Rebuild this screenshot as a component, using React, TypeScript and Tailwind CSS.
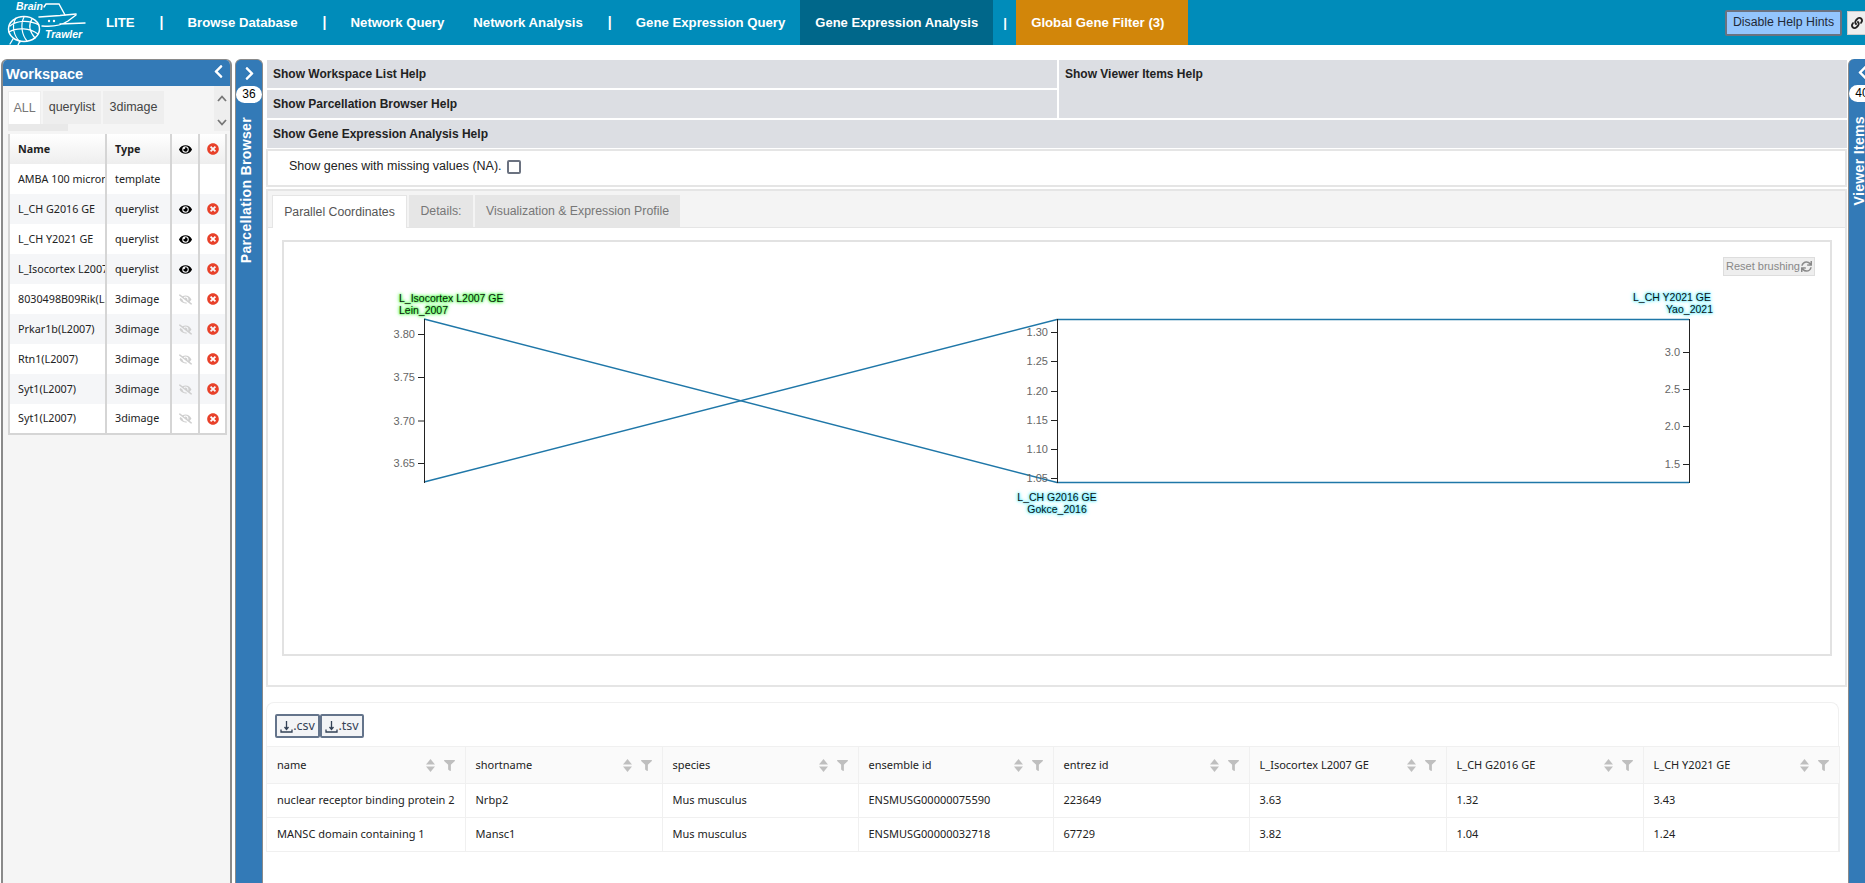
import { FaChevronLeft, FaChevronRight, FaEye, FaEyeSlash, FaFilter, FaLink, FaSync, FaTimesCircle } from "react-icons/fa";

const workspaceRows = [
  { name: "L_CH G2016 GE", type: "querylist", on: true },
  { name: "L_CH Y2021 GE", type: "querylist", on: true },
  { name: "L_Isocortex L2007 GE", type: "querylist", on: true },
  { name: "8030498B09Rik(L2007)", type: "3dimage", on: false },
  { name: "Prkar1b(L2007)", type: "3dimage", on: false },
  { name: "Rtn1(L2007)", type: "3dimage", on: false },
  { name: "Syt1(L2007)", type: "3dimage", on: false },
  { name: "Syt1(L2007)", type: "3dimage", on: false },
];

const geneColumns = [
  { label: "name", width: 198 },
  { label: "shortname", width: 197 },
  { label: "species", width: 196 },
  { label: "ensemble id", width: 195 },
  { label: "entrez id", width: 196 },
  { label: "L_Isocortex L2007 GE", width: 197 },
  { label: "L_CH G2016 GE", width: 197 },
  { label: "L_CH Y2021 GE", width: 196 },
];

const geneRows = [
  ["nuclear receptor binding protein 2", "Nrbp2", "Mus musculus", "ENSMUSG00000075590", "223649", "3.63", "1.32", "3.43"],
  ["MANSC domain containing 1", "Mansc1", "Mus musculus", "ENSMUSG00000032718", "67729", "3.82", "1.04", "1.24"],
];

const axes = [
  { x: 424, ticks: [["3.80", 334], ["3.75", 377], ["3.70", 420.5], ["3.65", 463]] },
  { x: 1057, ticks: [["1.30", 332], ["1.25", 361], ["1.20", 391], ["1.15", 420], ["1.10", 449], ["1.05", 478]] },
  { x: 1689, ticks: [["3.0", 352], ["2.5", 389], ["2.0", 426], ["1.5", 464]] },
] as const;

function Logo() {
  return (
    <div className="relative w-[106px] h-[45px] shrink-0">
      <svg width="100" height="45" viewBox="0 0 100 45" fill="none" stroke="white" strokeLinecap="round">
        <ellipse cx="24" cy="29" rx="15.5" ry="12.5" strokeWidth="1.5" />
        <path d="M10 26 C17 20 30 20 39 25 M9 32 C17 27 30 28 38 34 M16 18 C11 26 14 36 20 42 M24 17 C20 25 22 35 27 41 M32 19 C28 25 30 32 35 38" strokeWidth="1.2" />
        <path d="M13 39 L10 44 M20 41 L18 45" strokeWidth="1.3" />
        <path d="M44 7 L46 4 L59 4 L65 15" strokeWidth="1.4" />
        <path d="M39 17 L60 15.5 L76 14" strokeWidth="1.6" />
        <path d="M42 26 C52 27 62 25 68 21 L76 15 M60 24 L85 23" strokeWidth="1.4" />
        <circle cx="49" cy="21" r="1.2" fill="white" stroke="none" />
        <circle cx="54" cy="21" r="1.2" fill="white" stroke="none" />
      </svg>
      <span className="absolute left-[16px] top-[0px] text-[10.5px] leading-[12px] font-bold italic text-white">Brain</span>
      <span className="absolute left-[45px] top-[28px] text-[10.5px] leading-[12px] font-bold italic text-white">Trawler</span>
    </div>
  );
}

function Sep() {
  return <span className="text-[14px] font-bold text-white w-[3px] mx-[25px]">|</span>;
}

function SortIcon() {
  return (
    <svg width="9" height="13" viewBox="0 0 9 13" fill="#bfbfbf">
      <path d="M4.5 0 L9 5.5 L0 5.5 Z" />
      <path d="M4.5 13 L9 7.5 L0 7.5 Z" />
    </svg>
  );
}

function DownloadIcon() {
  return (
    <svg width="13" height="13" viewBox="0 0 13 13" fill="none" stroke="#334155" strokeWidth="1.3">
      <path d="M6.5 1 V9 M4.5 7 L6.5 9.5 L8.5 7" />
      <path d="M1 9.5 V12 H12 V9.5" />
    </svg>
  );
}

function VerticalTab({ count, label, chevron }: { count: string; label: string; chevron: React.ReactNode }) {
  return (
    <div className="flex flex-col items-center w-[26px] h-full pt-[6px] text-white">
      <div className="h-[20px] text-[15px]">{chevron}</div>
      <div className="w-[26px] h-[17px] shrink-0 bg-white rounded-full text-black text-[12px] leading-[17px] text-center">{count}</div>
      <div className="mt-[14px] mr-[6px] [writing-mode:vertical-rl] rotate-180 text-[14px] leading-[20px] font-bold tracking-[0.35px] whitespace-nowrap">{label}</div>
    </div>
  );
}

function WorkspacePanel() {
  return (
    <div className="w-[231px] ml-[1px] shrink-0 flex flex-col bg-[#f5f5f5] border-x-2 border-t border-[#8a8a8a] rounded-t-md overflow-hidden">
      <div className="h-[26px] shrink-0 bg-[#337ab7] flex items-center justify-between pl-[3px] pr-[4px] text-white">
        <span className="text-[14.5px] font-bold mt-[3px]">Workspace</span>
        <FaChevronLeft className="text-[15px] -mt-[4px]" />
      </div>
      <div className="flex h-[48px] shrink-0">
        <div className="w-[212px] pl-[5px] pt-[5px]">
          <div className="flex gap-[2px] text-[12.5px] h-[33px] text-[#444]">
            <div className="w-[33px] bg-white border border-[#eee] border-b-0 flex items-center justify-center text-[#777]">ALL</div>
            <div className="w-[58px] bg-[#eeeeee] flex items-center justify-center">querylist</div>
            <div className="w-[61px] bg-[#eeeeee] flex items-center justify-center">3dimage</div>
          </div>
          <div className="w-[60px] h-[7px] bg-[#e9e9e9]" />
        </div>
        <div className="w-[16px] h-[45px] bg-[#eeeeee] flex flex-col items-center justify-between pt-[9px] pb-[5px] text-[#777]">
          <svg width="10" height="7" viewBox="0 0 10 7" fill="none" stroke="currentColor" strokeWidth="1.8"><path d="M1 6 L5 1.5 L9 6" /></svg>
          <svg width="10" height="7" viewBox="0 0 10 7" fill="none" stroke="currentColor" strokeWidth="1.8"><path d="M1 1 L5 5.5 L9 1" /></svg>
        </div>
      </div>
      <table className="ml-[5px] w-[217px] table-fixed border-collapse font-['Noto_Sans',sans-serif] text-[10.75px] text-[#222] border-b-2 border-x-2 border-[#d5d5d5] bg-white">
        <colgroup>
          <col className="w-[97px]" />
          <col className="w-[65px]" />
          <col className="w-[28px]" />
          <col className="w-[27px]" />
        </colgroup>
        <thead>
          <tr className="h-[30px] bg-gradient-to-b from-white to-[#eeeeee]">
            <th className="text-left pl-[8px] border-r-2 border-[#d5d5d5] font-bold">Name</th>
            <th className="text-left pl-[8px] border-r-2 border-[#d5d5d5] font-bold">Type</th>
            <th className="border-r-2 border-[#d5d5d5]"><FaEye className="mx-auto text-[13px] text-black" /></th>
            <th><FaTimesCircle className="mx-auto text-[12px] text-[#e8412a]" /></th>
          </tr>
        </thead>
        <tbody>
          <tr className="h-[30px] bg-white">
            <td className="pl-[8px] border-r-2 border-[#d5d5d5] whitespace-nowrap overflow-hidden">AMBA 100 micron</td>
            <td className="pl-[8px] border-r-2 border-[#d5d5d5]">template</td>
            <td className="border-r-2 border-[#d5d5d5]" />
            <td />
          </tr>
          {workspaceRows.map((row, i) => (
            <tr key={i} className={i % 2 === 0 ? "h-[30px] bg-[#f5f6f8]" : "h-[30px] bg-white"}>
              <td className="pl-[8px] border-r-2 border-[#d5d5d5] whitespace-nowrap overflow-hidden">{row.name}</td>
              <td className="pl-[8px] border-r-2 border-[#d5d5d5]">{row.type}</td>
              <td className="border-r-2 border-[#d5d5d5]">
                {row.on ? <FaEye className="mx-auto text-[13px] text-black" /> : <FaEyeSlash className="mx-auto text-[13px] text-[#cfcfcf]" />}
              </td>
              <td><FaTimesCircle className="mx-auto text-[12px] text-[#e8412a]" /></td>
            </tr>
          ))}
        </tbody>
      </table>
    </div>
  );
}

function Chart() {
  return (
    <svg width="1546" height="412" viewBox="284 242 1546 412" className="block">
      <path d="M424 319 L1057 482.5 L1689 482.5" fill="none" stroke="#1f77a8" strokeWidth="1.4" />
      <path d="M424 482 L1057 319.5 L1689 319.5" fill="none" stroke="#1f77a8" strokeWidth="1.4" />
      {axes.map((axis) => (
        <g key={axis.x}>
          <path d={`M${axis.x + 0.5} 319 V483`} stroke="#222" strokeWidth="1" />
          {axis.ticks.map(([label, y]) => (
            <g key={label}>
              <path d={`M${axis.x - 6} ${y + 0.5} H${axis.x}`} stroke="#222" strokeWidth="1" />
              <text x={axis.x - 9} y={y + 4} textAnchor="end" fontSize="11" fill="#666">{label}</text>
            </g>
          ))}
        </g>
      ))}
      <g fontSize="10.5" fill="#111">
        <text x="399" y="302" className="[text-shadow:0_0_2px_#33ff33,0_0_3px_#33ff33,0_0_4px_#33ff33]">L_Isocortex L2007 GE</text>
        <text x="399" y="314" className="[text-shadow:0_0_2px_#33ff33,0_0_3px_#33ff33,0_0_4px_#33ff33]">Lein_2007</text>
        <text x="1057" y="501" textAnchor="middle" className="[text-shadow:0_0_2px_#55e8ff,0_0_3px_#55e8ff,0_0_4px_#55e8ff]">L_CH G2016 GE</text>
        <text x="1057" y="513" textAnchor="middle" className="[text-shadow:0_0_2px_#55e8ff,0_0_3px_#55e8ff,0_0_4px_#55e8ff]">Gokce_2016</text>
        <text x="1711" y="301" textAnchor="end" className="[text-shadow:0_0_2px_#55e8ff,0_0_3px_#55e8ff,0_0_4px_#55e8ff]">L_CH Y2021 GE</text>
        <text x="1713" y="313" textAnchor="end" className="[text-shadow:0_0_2px_#55e8ff,0_0_3px_#55e8ff,0_0_4px_#55e8ff]">Yao_2021</text>
      </g>
    </svg>
  );
}

export default function App() {
  return (
    <div className="w-[1865px] h-[883px] overflow-hidden flex flex-col bg-white font-['Liberation_Sans',Arial,sans-serif]">
      <nav className="h-[45px] shrink-0 bg-[#008cba] flex items-center text-[13.2px] font-bold text-white overflow-hidden">
        <Logo />
        <span>LITE</span>
        <Sep />
        <span>Browse Database</span>
        <Sep />
        <span>Network Query</span>
        <span className="ml-[29px]">Network Analysis</span>
        <Sep />
        <span>Gene Expression Query</span>
        <span className="ml-[15px] h-full px-[15px] text-[13px] bg-[#00678a] flex items-center">Gene Expression Analysis</span>
        <span className="w-[3px] mx-[10px]">|</span>
        <span className="h-full pl-[15px] pr-[23px] bg-[#d2860a] flex items-center">Global Gene Filter (3)</span>
        <button className="ml-auto h-[26px] w-[117px] bg-[#93c5fd] border-2 border-[#6b7280] rounded-[2px] text-[12.3px] font-normal text-[#1f2937] whitespace-nowrap">Disable Help Hints</button>
        <button className="ml-[5px] -mr-[2px] h-[24px] w-[20px] bg-[#eeeeee] border border-[#cccccc] flex items-center justify-center text-[#222]"><FaLink className="text-[12px]" /></button>
      </nav>

      <div className="flex flex-1 min-h-0 pt-[14px]">
        <WorkspacePanel />
        <div className="w-[28px] ml-[3px] mr-[3px] shrink-0 bg-[#337ab7] border border-b-0 border-[#8a8a8a] rounded-t-md overflow-hidden">
          <VerticalTab count="36" label="Parcellation Browser" chevron={<FaChevronRight />} />
        </div>

        <main className="w-[1581px] shrink-0 flex flex-col">
          <div className="grid grid-cols-[790px_1fr] gap-x-[2px] gap-y-[2px] text-[12px] font-bold text-[#222] mt-[1px] pl-[1px]">
            <div className="h-[28px] bg-[#dcdee3] pl-[6px] flex items-center">Show Workspace List Help</div>
            <div className="row-span-2 bg-[#dcdee3] pl-[6px] pt-[7px] leading-[14px]">Show Viewer Items Help</div>
            <div className="h-[28px] bg-[#dcdee3] pl-[6px] flex items-center">Show Parcellation Browser Help</div>
            <div className="col-span-2 h-[28px] bg-[#dcdee3] pl-[6px] flex items-center">Show Gene Expression Analysis Help</div>
          </div>

          <div className="h-[38px] mt-[1px] border-2 border-[#e5e5e5] flex items-center pl-[21px] pb-[4px] text-[12.5px] text-[#222]">
            <span>Show genes with missing values (NA).</span>
            <span className="ml-[5px] mt-[1px] w-[14px] h-[14px] border-2 border-[#6b7280] rounded-[2px] bg-white" />
          </div>

          <div className="h-[498px] mt-[2px] border-2 border-[#e5e5e5] flex flex-col">
            <div className="h-[37px] shrink-0 bg-[#f4f4f4] border-b border-[#e5e5e5] flex items-end pl-[4px] gap-[2px] text-[12.3px] text-[#777]">
              <div className="h-[33px] w-[135px] bg-white border border-b-0 border-[#e5e5e5] -mb-px flex items-center justify-center text-[#555]">Parallel Coordinates</div>
              <div className="h-[32px] w-[64px] bg-[#e6e6e6] flex items-center justify-center">Details:</div>
              <div className="h-[32px] w-[205px] bg-[#e6e6e6] flex items-center justify-center">Visualization &amp; Expression Profile</div>
            </div>
            <div className="relative mt-[12px] ml-[14px] w-[1550px] h-[416px] border-2 border-[#e2e2e2]">
              <Chart />
              <button className="absolute left-[1439px] top-[15px] w-[92px] h-[19px] bg-[#eeeeee] border border-[#dddddd] text-[11px] text-[#888] flex items-center justify-center gap-px whitespace-nowrap">
                Reset brushing<FaSync className="text-[11px]" />
              </button>
            </div>
          </div>

          <div className="mt-[15px] mr-[8px] border-t border-x border-[#f0f0f0] rounded-t-lg font-['Noto_Sans',sans-serif] text-[11px] text-[#222]">
            <div className="h-[43px] pl-[8px] flex items-end pb-[8px]">
              <button className="w-[45px] h-[24px] bg-[#f3f4f6] border-2 border-[#64748b] rounded-[2px] flex items-center justify-center text-[12.5px] text-[#334155]"><DownloadIcon />.csv</button>
              <button className="w-[44px] h-[24px] bg-[#f3f4f6] border-2 border-[#64748b] rounded-[2px] flex items-center justify-center text-[12.5px] text-[#334155]"><DownloadIcon />.tsv</button>
            </div>
            <table className="table-fixed border-collapse w-[1572px]">
              <colgroup>
                {geneColumns.map((col) => (
                  <col key={col.label} style={{ width: col.width }} />
                ))}
              </colgroup>
              <thead>
                <tr className="h-[37px] bg-[#fafafa] border-y border-[#f0f0f0]">
                  {geneColumns.map((col) => (
                    <th key={col.label} className="border-r border-[#f0f0f0] px-[10px] font-normal text-left">
                      <div className="flex items-center">
                        <span className="flex-1 whitespace-nowrap">{col.label}</span>
                        <SortIcon />
                        <FaFilter className="ml-[9px] text-[11px] text-[#bfbfbf]" />
                      </div>
                    </th>
                  ))}
                </tr>
              </thead>
              <tbody>
                {geneRows.map((row) => (
                  <tr key={row[3]} className="h-[34px] border-b border-[#f0f0f0]">
                    {row.map((cell, i) => (
                      <td key={i} className="border-r border-[#f0f0f0] pl-[10px] whitespace-nowrap">{cell}</td>
                    ))}
                  </tr>
                ))}
              </tbody>
            </table>
          </div>
        </main>

        <div className="ml-[1px] flex-1 bg-[#337ab7] border-l border-[#8a8a8a] rounded-tl-md overflow-hidden">
          <VerticalTab count="40" label="Viewer Items" chevron={<FaChevronLeft />} />
        </div>
      </div>
    </div>
  );
}
